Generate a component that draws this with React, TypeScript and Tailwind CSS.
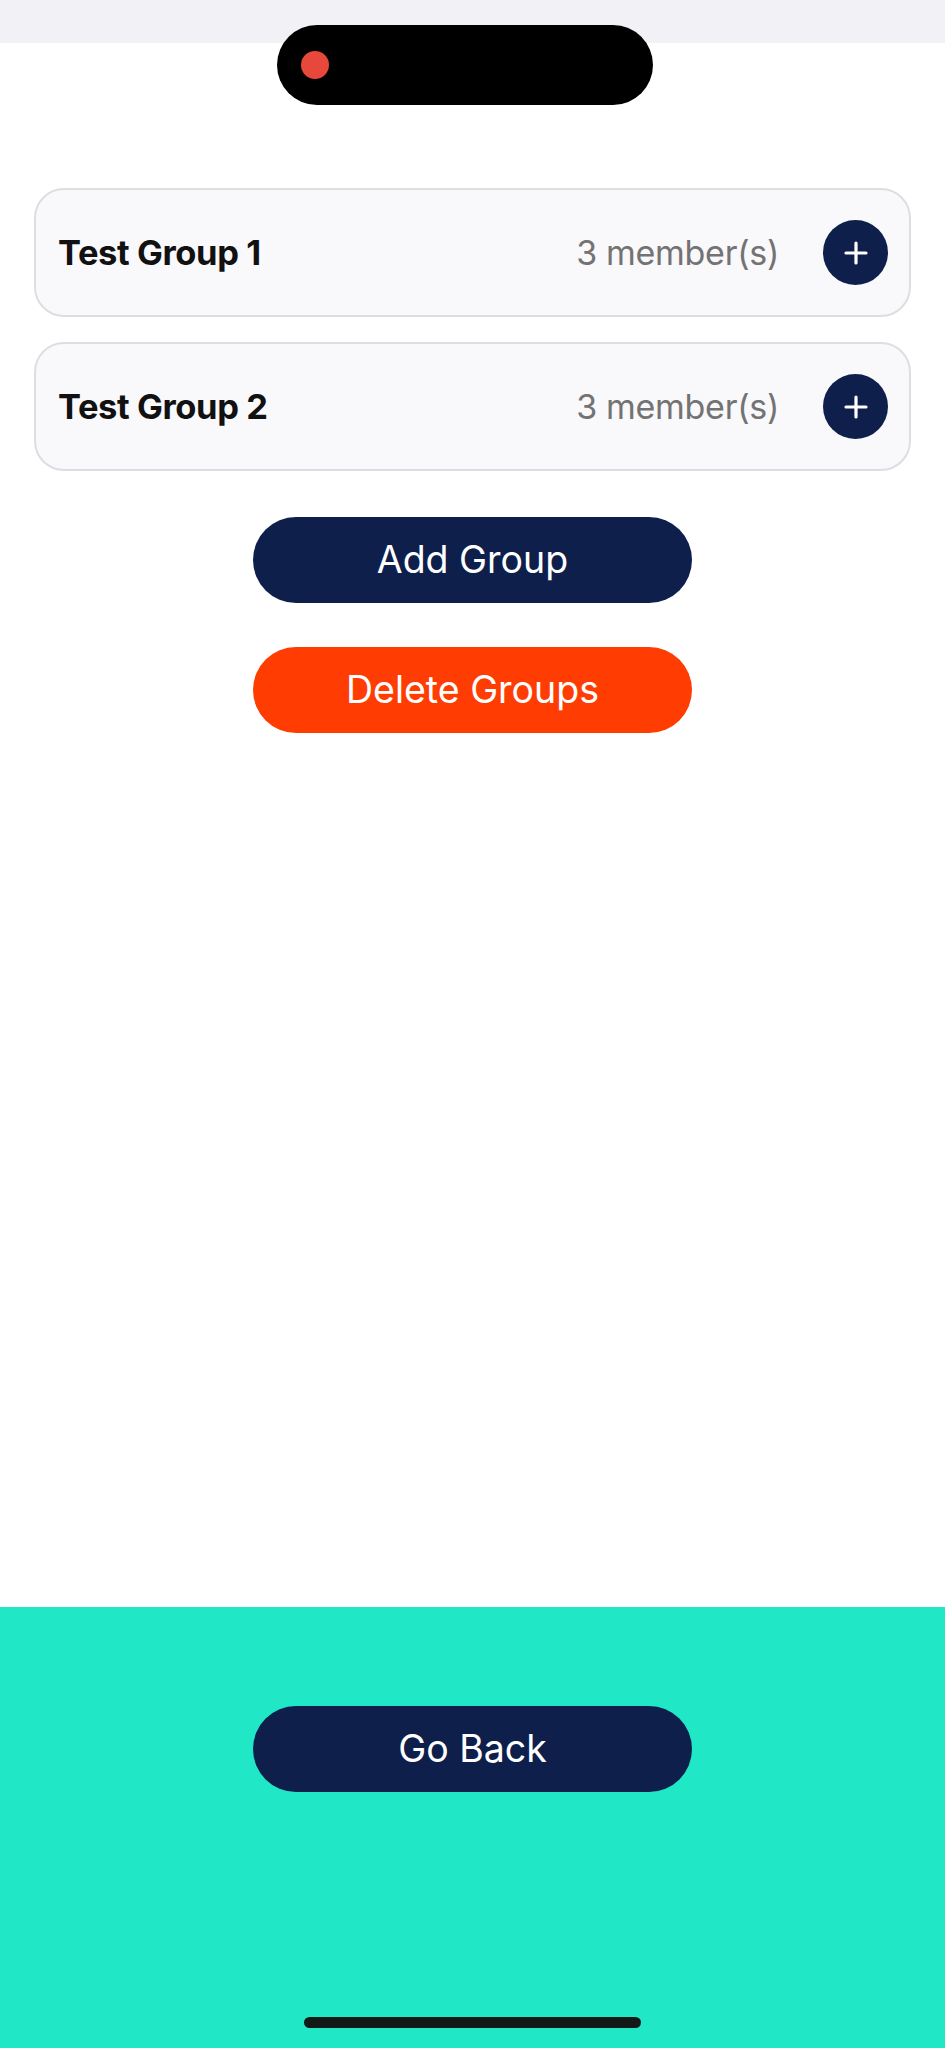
import React from "react";

const groups = [
  { name: "Test Group 1", members: 3 },
  { name: "Test Group 2", members: 3 },
];

const PlusButton = () => (
  <button className="flex h-[65px] w-[65px] shrink-0 items-center justify-center rounded-full bg-[#0e1f4b]">
    <svg width="26" height="26" viewBox="0 0 26 26">
      <path d="M13 3v20M3 13h20" stroke="white" strokeWidth="3.2" strokeLinecap="round" />
    </svg>
  </button>
);

const App = () => {
  return (
    <div
      className="relative flex min-h-[2048px] w-[945px] flex-col bg-white"
      style={{ fontFamily: "Inter, 'Liberation Sans', sans-serif" }}
    >
      {/* status area */}
      <div className="h-[43px] w-full bg-[#f2f1f5]" />
      <div className="absolute left-[277px] top-[25px] flex h-[80px] w-[376px] items-center rounded-full bg-black pl-[24px]">
        <div className="h-[28px] w-[28px] rounded-full bg-[#e8473b]" />
      </div>

      {/* main content */}
      <div className="flex flex-1 flex-col items-center pt-[145px]">
        <div className="flex w-full flex-col gap-[25px] px-[34px]">
          {groups.map((g) => (
            <div
              key={g.name}
              className="flex h-[129px] items-center rounded-[30px] border-2 border-[#dedde2] bg-[#f9f8fb] pl-[22px] pr-[21px]"
            >
              <span className="flex-1 text-[34.5px] font-bold tracking-[-0.4px] text-[#111111]">{g.name}</span>
              <span className="mr-[44px] text-[34px] tracking-[-0.3px] text-[#737373]">{g.members} member(s)</span>
              <PlusButton />
            </div>
          ))}
        </div>

        <button className="mt-[46px] flex h-[86px] w-[439px] items-center justify-center rounded-full bg-[#0e1f4b] text-[37.5px] text-white">
          Add Group
        </button>
        <button className="mt-[44px] flex h-[86px] w-[439px] items-center justify-center rounded-full bg-[#ff3d03] text-[37.5px] text-white">
          Delete Groups
        </button>
      </div>

      {/* footer */}
      <div className="flex h-[441px] flex-col items-center bg-[#20e8c6]">
        <button className="mt-[99px] flex h-[86px] w-[439px] items-center justify-center rounded-full bg-[#0e1f4b] text-[37.5px] text-white">
          Go Back
        </button>
        <div className="mt-auto mb-[20px] h-[11px] w-[337px] rounded-full bg-[#111a17]" />
      </div>
    </div>
  );
};

export default App;
